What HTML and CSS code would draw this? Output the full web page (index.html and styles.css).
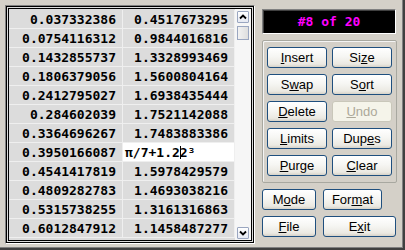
FILE: index.html
```html
<!DOCTYPE html>
<html>
<head>
<meta charset="utf-8">
<link rel="stylesheet" href="styles.css">
</head>
<body>
<div class="window">
  <div class="listframe">
    <div class="listinner">
      <div class="grid">
        <div class="cell">0.037332386</div><div class="cell">0.4517673295</div>
        <div class="cell">0.0754116312</div><div class="cell">0.9844016816</div>
        <div class="cell">0.1432855737</div><div class="cell">1.3328993469</div>
        <div class="cell">0.1806379056</div><div class="cell">1.5600804164</div>
        <div class="cell">0.2412795027</div><div class="cell">1.6938435444</div>
        <div class="cell">0.284602039</div><div class="cell">1.7521142088</div>
        <div class="cell">0.3364696267</div><div class="cell">1.7483883386</div>
        <div class="cell">0.3950166087</div><div class="cell edit">π/7+1.2<span class="caret"></span>2³</div>
        <div class="cell">0.4541417819</div><div class="cell">1.5978429579</div>
        <div class="cell">0.4809282783</div><div class="cell">1.4693038216</div>
        <div class="cell">0.5315738255</div><div class="cell">1.3161316863</div>
        <div class="cell">0.6012847912</div><div class="cell">1.1458487277</div>
      </div>
      <div class="scrollbar">
        <div class="sbtn"><svg width="10" height="10" viewBox="0 0 10 10"><path d="M2 6.5 L5 3.5 L8 6.5" fill="none" stroke="#000" stroke-width="1.8"/></svg></div>
        <div class="thumb"></div>
        <div class="track"></div>
        <div class="sbtn"><svg width="10" height="10" viewBox="0 0 10 10"><path d="M2 3.5 L5 6.5 L8 3.5" fill="none" stroke="#000" stroke-width="1.8"/></svg></div>
      </div>
    </div>
  </div>
  <div class="side">
    <div class="display">#8 of 20</div>
    <div class="group">
      <button class="btn"><u>I</u>nsert</button>
      <button class="btn">Si<u>z</u>e</button>
      <button class="btn">S<u>w</u>ap</button>
      <button class="btn">S<u>o</u>rt</button>
      <button class="btn"><u>D</u>elete</button>
      <button class="btn disabled"><u>U</u>ndo</button>
      <button class="btn"><u>L</u>imits</button>
      <button class="btn">Dup<u>e</u>s</button>
      <button class="btn"><u>P</u>urge</button>
      <button class="btn"><u>C</u>lear</button>
    </div>
    <div class="bottom">
      <button class="btn narrow">M<u>o</u>de</button>
      <button class="btn mid">For<u>m</u>at</button>
      <button class="btn narrow"><u>F</u>ile</button>
      <button class="btn wide">E<u>x</u>it</button>
    </div>
  </div>
</div>
</body>
</html>
```
FILE: styles.css
```css
html, body {
  margin: 0;
  padding: 0;
  background: #d4d0c8;
}
.window {
  box-sizing: border-box;
  width: 405px;
  height: 250px;
  display: flex;
  gap: 7px;
  padding: 5px 6px 0 5px;
  border-right: 2px solid #404040;
  border-bottom: 2px solid #404040;
  box-shadow: inset -1px -1px 0 #808080;
  background: #d4d0c8;
}
.listframe {
  width: 250px;
  height: 239px;
  box-sizing: border-box;
  border: 1px solid #808080;
  border-right-color: #ffffff;
  border-bottom-color: #ffffff;
  flex: none;
}
.listinner {
  height: 100%;
  box-sizing: border-box;
  border: 3px double #000;
  display: flex;
  background: #dcdcdc;
}
.grid {
  display: grid;
  grid-template-columns: 114px 112px;
  grid-auto-rows: 19px;
  padding-top: 1px;
  align-content: start;
}
.cell {
  box-sizing: border-box;
  border-bottom: 1px solid #efefef;
  border-right: 1px solid #efefef;
  font-family: "DejaVu Sans Mono", monospace;
  font-weight: bold;
  font-size: 13px;
  letter-spacing: 0;
  line-height: 19px;
  text-align: right;
  padding-right: 6px;
  color: #000;
  white-space: nowrap;
}
.cell.edit {
  background: #fff;
  text-align: left;
  padding-left: 2px;
  padding-right: 0;
}
.caret {
  display: inline-block;
  width: 1px;
  height: 13px;
  background: #000;
  vertical-align: -2px;
  margin-right: -1px;
}
.scrollbar {
  flex: 1;
  background: #f6f6f6;
  display: flex;
  flex-direction: column;
  padding: 2px 2px 1px 2px;
  box-sizing: border-box;
}
.sbtn {
  height: 12px;
  box-sizing: border-box;
  border: 1px solid #9aa6c0;
  border-radius: 1px;
  background: linear-gradient(#ffffff, #e6e9f2);
  display: flex;
  align-items: center;
  justify-content: center;
}
.sbtn svg { display: block; }
.thumb {
  margin-top: 3px;
  height: 14px;
  box-sizing: border-box;
  border: 1px solid #9aa6c0;
  background: linear-gradient(90deg, #f2f2f2, #dedede);
}
.track { flex: 1; }
.side {
  width: 135px;
  padding-top: 4px;
  display: flex;
  flex-direction: column;
}
.display {
  height: 25px;
  box-sizing: border-box;
  border: 1px solid;
  border-color: #808080 #ffffff #ffffff #808080;
  box-shadow: inset 1px 1px 0 #404040;
  background: #000;
  color: #ff00ff;
  font-family: "DejaVu Sans Mono", monospace;
  font-weight: bold;
  font-size: 13px;
  line-height: 23px;
  text-align: center;
  width: 134px;
}
.group {
  margin-top: 6px;
  height: 143px;
  box-sizing: border-box;
  border: 1px solid #a8a8a0;
  border-radius: 2px;
  box-shadow: inset 1px 1px 0 #f4f4f4;
  padding: 6px 4px 0 4px;
  display: grid;
  grid-template-columns: 60px 60px;
  grid-auto-rows: 21px;
  column-gap: 5px;
  row-gap: 6px;
}
.btn {
  margin: 0;
  padding: 0;
  height: 21px;
  box-sizing: border-box;
  border: 1px solid #1f4f7e;
  border-radius: 3px;
  background: linear-gradient(#ffffff 0%, #f6f6f3 45%, #ebe9e2 85%, #d6d2c8 100%);
  font-family: "Liberation Sans", Arial, sans-serif;
  font-size: 13px;
  color: #000;
  line-height: 19px;
  text-align: center;
}
.btn.disabled {
  border-color: #c9c7ba;
  background: #f5f4ea;
  color: #aca899;
}
.bottom {
  margin-top: 6px;
  display: flex;
  flex-wrap: wrap;
  column-gap: 7px;
  row-gap: 6px;
}
.narrow { width: 54px; }
.mid { width: 59px; }
.wide { width: 73px; }
```
